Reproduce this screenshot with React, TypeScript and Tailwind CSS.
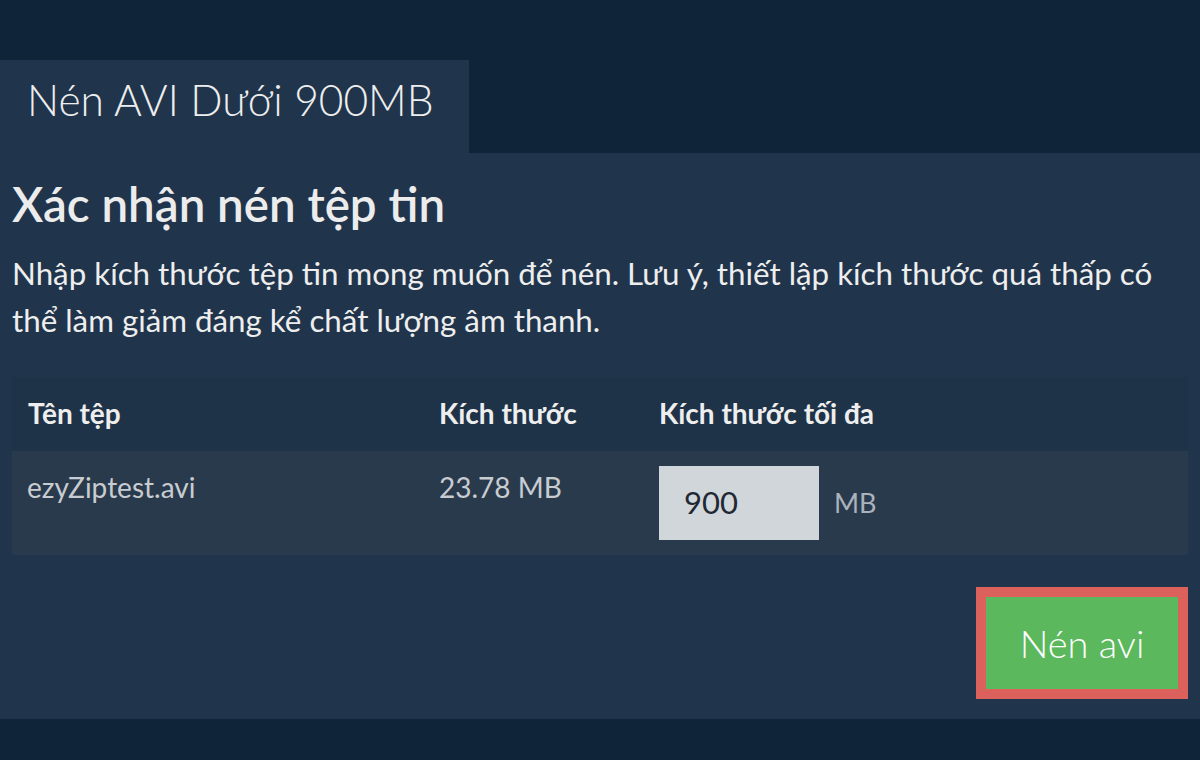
import React from "react";

export default function App() {
  return (
    <div
      className="min-h-[760px] w-[1200px] bg-[#0f2339] pt-[60px]"
      style={{ fontFamily: "Lato, 'Noto Sans', sans-serif" }}
    >
      <div className="h-[93px] w-[469px] bg-[#20354c] pl-[27px] pt-[14px]">
        <div className="text-[42.5px] font-light leading-[1.2] text-[#eeeeee]">Nén AVI Dưới 900MB</div>
      </div>
      <div className="h-[566px] bg-[#20354c] px-[12px] pt-[22px]">
        <h1 className="text-[47.5px] font-semibold leading-[1.2] text-[#ececec]">Xác nhận nén tệp tin</h1>
        <p className="mt-[18px] text-[31.3px] leading-[47px] text-[#eeeeee]">
          Nhập kích thước tệp tin mong muốn để nén. Lưu ý, thiết lập kích thước quá thấp có thể làm giảm đáng kể chất lượng âm thanh.
        </p>
        <div className="mt-[33px] w-[1176px]">
          <div className="grid h-[74px] grid-cols-[411px_220px_1fr] items-center bg-[#1e3348] text-[28px] font-bold leading-[1.2] text-[#eeeeee]">
            <div className="pl-[16px]">Tên tệp</div>
            <div className="pl-[16px]">Kích thước</div>
            <div className="pl-[16px]">Kích thước tối đa</div>
          </div>
          <div className="grid h-[104px] grid-cols-[411px_220px_1fr] bg-[#2a3a4d] text-[28px] leading-[1.2] text-[#c8ccd1]">
            <div className="pl-[15px] pt-[20px]">ezyZiptest.avi</div>
            <div className="pl-[16px] pt-[20px]">23.78 MB</div>
            <div className="flex items-center self-start pl-[16px] pt-[15px]">
              <div className="flex h-[74px] w-[160px] items-center bg-[#d1d6db] pl-[25px] text-[31px] text-[#1f2933]">900</div>
              <span className="ml-[15px] text-[27px] text-[#aab3bd]">MB</span>
            </div>
          </div>
        </div>
        <div className="mt-[32px] flex justify-end">
          <button className="flex h-[112px] w-[212px] items-center justify-center border-[10px] border-[#dc605c] bg-[#5cb85c] text-[38px] font-light text-white">
            Nén avi
          </button>
        </div>
      </div>
    </div>
  );
}
